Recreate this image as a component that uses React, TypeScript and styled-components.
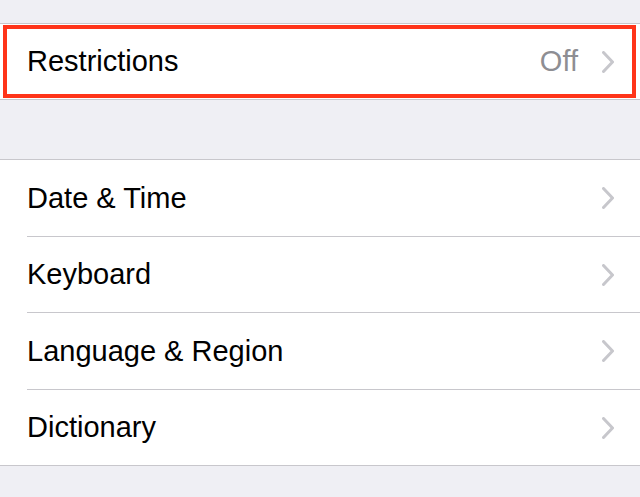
import React from "react";
import styled, { createGlobalStyle } from "styled-components";

const Global = createGlobalStyle`
  html, body { margin: 0; padding: 0; background: #efeff4; }
  body { font-family: "Liberation Sans", Arial, sans-serif; -webkit-font-smoothing: antialiased; }
`;

const Page = styled.div`
  width: 640px;
  height: 497px;
  background: #efeff4;
  padding-top: 23px;
  box-sizing: border-box;
  overflow: hidden;
`;

const Section = styled.div<{ $gap?: number }>`
  background: #fff;
  border-top: 1px solid #c8c7cc;
  border-bottom: 1px solid #c8c7cc;
  margin-bottom: ${(p) => p.$gap ?? 0}px;
  display: flex;
  flex-direction: column;
`;

const Row = styled.div<{ $h: number }>`
  position: relative;
  height: ${(p) => p.$h}px;
  padding-left: 27px;
  display: flex;
  flex-direction: column;
`;

const RowInner = styled.div<{ $sep?: boolean }>`
  flex: 1;
  display: flex;
  align-items: center;
  padding-right: 26px;
  border-bottom: ${(p) => (p.$sep ? "1px solid #c8c7cc" : "none")};
`;

const Label = styled.span`
  flex: 1;
  font-size: 29px;
  color: #000;
`;

const Detail = styled.span`
  font-size: 29px;
  color: #8e8e93;
  margin-right: 24px;
`;

const Highlight = styled.div`
  position: absolute;
  left: 3px;
  top: 1px;
  right: 4px;
  bottom: 1px;
  border: 4px solid #ff3419;
  pointer-events: none;
`;

const Chevron = () => (
  <svg width="12" height="22" viewBox="0 0 12 22" fill="none">
    <polyline
      points="1.5,1.5 10.5,11 1.5,20.5"
      stroke="#c7c7cc"
      strokeWidth="3"
      strokeLinecap="round"
      strokeLinejoin="round"
    />
  </svg>
);

const items = [
  { t: "Date & Time", h: 77 },
  { t: "Keyboard", h: 76 },
  { t: "Language & Region", h: 77 },
  { t: "Dictionary", h: 75 },
];

export default function App() {
  return (
    <Page>
      <Global />
      <Section $gap={59}>
        <Row $h={75}>
          <RowInner>
            <Label>Restrictions</Label>
            <Detail>Off</Detail>
            <Chevron />
          </RowInner>
          <Highlight />
        </Row>
      </Section>
      <Section>
        {items.map((it, i) => (
          <Row key={it.t} $h={it.h}>
            <RowInner $sep={i < items.length - 1}>
              <Label>{it.t}</Label>
              <Chevron />
            </RowInner>
          </Row>
        ))}
      </Section>
    </Page>
  );
}
